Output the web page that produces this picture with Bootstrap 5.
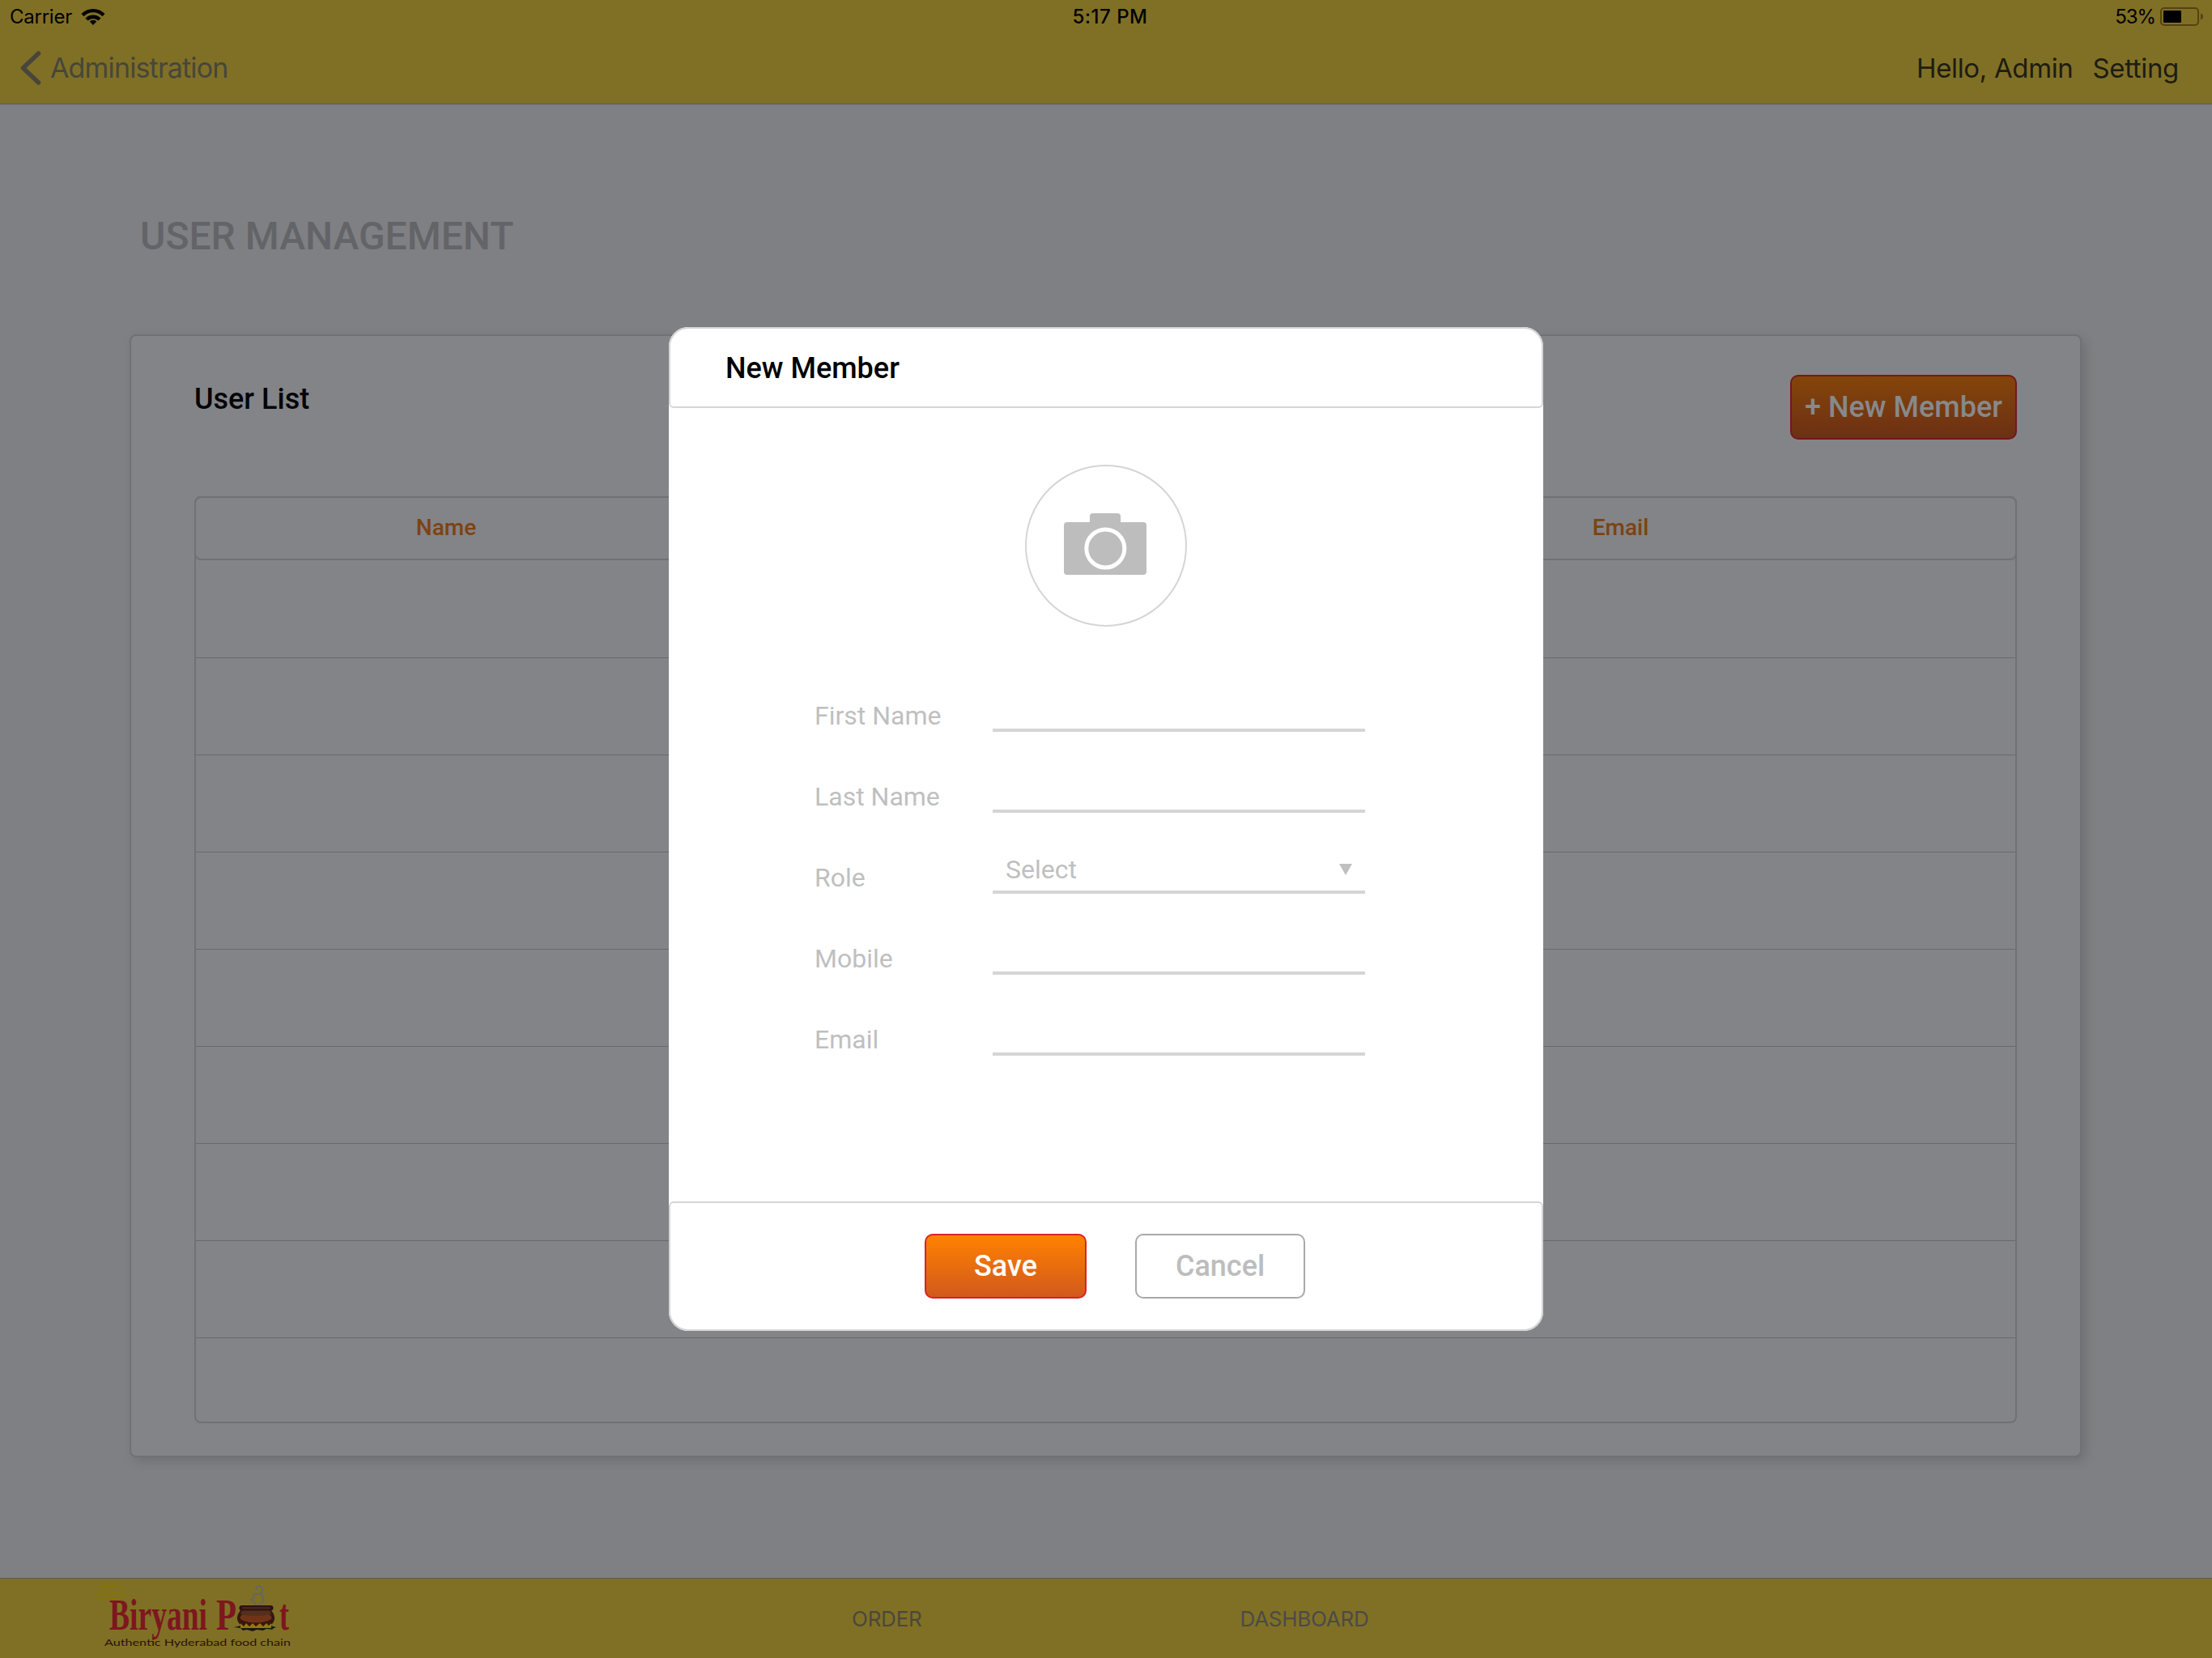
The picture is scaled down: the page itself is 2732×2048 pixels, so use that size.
<!DOCTYPE html>
<html lang="en">
<head>
<meta charset="utf-8">
<meta name="viewport" content="width=device-width, initial-scale=1">
<title>User Management</title>
<link rel="stylesheet" href="https://cdn.jsdelivr.net/npm/bootstrap@5.3.0/dist/css/bootstrap.min.css">
<style>
  html, body { height: 2048px; }
  body { background: #7f8083; font-family: Roboto, "Open Sans", sans-serif; color: #000; overflow: hidden; line-height: 1; }
  .sys { font-family: Inter, Roboto, sans-serif; }
  .top-bar { height: 129px; background: #807025; border-bottom: 1px solid #57595b; }
  .status-row { height: 46px; font-size: 24px; padding: 0 10px 5px 12px; display: grid; grid-template-columns: 1fr auto 1fr; }
  .status-row .carrier { letter-spacing: -.25px; }
  .status-row .clock { font-weight: 500; letter-spacing: .5px; padding-left: 8px; }
  .status-row .charge { letter-spacing: -1.1px; }
  .nav-row { height: 76px; padding: 0 41px 0 25px; font-size: 34px; }
  .back-link { color: #47463c; letter-spacing: -.85px; gap: 11px; }
  .who { color: #1e1c12; gap: 24px; letter-spacing: -.35px; font-size: 33px; padding-top: 1px; }
  .page-title { font-size: 48px; font-weight: 500; color: #636468; margin: 0; padding: 139px 0 0 173px; height: 284px; line-height: 48px; }
  .panel { width: 2411px; height: 1387px; margin-left: 160px; background: #838487; border: 2px solid #707175; border-radius: 8px; padding: 48px 78px 40px; box-shadow: 5px 5px 14px rgba(0,0,0,.13); }
  .panel-head { height: 150px; }
  .panel-head h2 { font-size: 36px; font-weight: 500; margin: 9px 0 0; color: #040508; }
  .act { height: 80px; border-radius: 10px; font-size: 36px; font-weight: 500; line-height: 1; display: flex; align-items: center; justify-content: center; border-width: 2px; padding: 0; }
  .act-dim { width: 280px; color: #87898c; background: linear-gradient(#84450a, #6d3014); border-color: #73181c; }
  .grid-box { border: 2px solid #707175; border-radius: 8px; height: 1145px; }
  .grid-head { margin: -2px -2px 0; height: 79px; border: 2px solid #707175; border-radius: 8px; color: #7c4313; font-size: 28px; font-weight: 500; padding-bottom: 2px; }
  .grid-line { height: 120px; border-bottom: 1px solid #68696d; }
  .grid-line:nth-child(2) { height: 121px; }
  .foot-bar { position: absolute; left: 0; right: 0; bottom: 0; height: 99px; background: #807025; border-top: 1px solid #57595b; font-size: 26px; color: #4b483b; letter-spacing: -.25px; }
  .foot-bar .tab-text { padding-top: 1px; }
  .dialog-card { position: absolute; left: 826px; top: 404px; width: 1080px; height: 1240px; background: #fff; border-radius: 24px; }
  .dlg-head { height: 100px; border: 2px solid #d5d5d5; border-radius: 24px 24px 6px 6px; padding: 2px 68px 0; font-size: 36px; font-weight: 500; }
  .dlg-foot { height: 160px; border: 2px solid #d5d5d5; border-radius: 6px 6px 24px 24px; gap: 60px; padding-left: 22px; }
  .dlg-body { padding: 70px 220px 0 180px; color: #bfbfbf; font-size: 32px; }
  .avatar { width: 200px; height: 200px; border: 2px solid #d5d5d5; margin: 0 0 30px 260px; }
  .field { height: 100px; }
  .field label { width: 220px; margin-bottom: 4px; line-height: 32px; }
  .line-input { height: 60px; border-bottom: 4px solid #d5d5d5; padding: 4px 16px 0; }
  .act-save { width: 200px; color: #fff; background: linear-gradient(#ff8200, #d1591d); border-color: #db2128; }
  .act-cancel { width: 210px; color: #bdbdbd; background: #fff; border-color: #a9a9a9; }
  .brand-art { margin-left: 115px; }
</style>
</head>
<body class="position-relative">
<header class="top-bar sys">
  <div class="status-row align-items-center">
    <div class="d-flex align-items-center carrier"><span>Carrier</span>
      <svg width="30" height="22" viewBox="0 0 30 22" style="margin-left:11px"><g fill="none" stroke="#000" stroke-width="4.4"><path d="M2 8.600a18.200 18.200 0 0 1 26 0"/><path d="M7 14a11.300 11.300 0 0 1 16 0"/></g><path d="M15 21l-4.300-4.400a6.200 6.200 0 0 1 8.600 0z"/></svg>
    </div>
    <div class="clock">5:17 PM</div>
    <div class="d-flex align-items-center justify-content-end"><span class="charge">53%</span>
      <svg width="54" height="24" viewBox="0 0 54 24" style="margin-left:6px"><rect x="1" y="1" width="46" height="21" rx="4" fill="none" stroke="#54430f" stroke-width="2"/><rect x="4" y="4" width="22" height="15" rx="1"/><path d="M50 7.500q3 1 3 4t-3 4z" fill="#54430f"/></svg>
    </div>
  </div>
  <div class="nav-row d-flex align-items-center justify-content-between">
    <div class="back-link d-flex align-items-center">
      <svg width="26" height="42" viewBox="0 0 26 42"><path d="M22.500 3L3.500 21l19 18" fill="none" stroke="#47463c" stroke-width="5.500" stroke-linecap="round" stroke-linejoin="round"/></svg>
      <span>Administration</span>
    </div>
    <div class="who d-flex"><span>Hello, Admin</span><span>Setting</span></div>
  </div>
</header>
<main>
  <h1 class="page-title">USER MANAGEMENT</h1>
  <section class="panel">
    <div class="panel-head d-flex justify-content-between align-items-start">
      <h2>User List</h2>
      <button class="btn act act-dim">+ New Member</button>
    </div>
    <div class="grid-box">
      <div class="grid-head d-flex align-items-center text-center"><span style="width:618px">Name</span><span style="width:658px"></span><span style="width:967px">Email</span></div>
      <div class="grid-line"></div><div class="grid-line"></div><div class="grid-line"></div><div class="grid-line"></div>
      <div class="grid-line"></div><div class="grid-line"></div><div class="grid-line"></div><div class="grid-line"></div>
    </div>
  </section>
</main>
<footer class="foot-bar sys d-flex align-items-center">
  <svg class="brand-art" width="255" height="98" viewBox="115 1950 255 98" letter-spacing="0">
    <path d="M123 1977q-4-10 4-16 10-6 20 0 2 5 7 8-4 5-12 6-10-3-19 2M127 1961l1-4 3 3M130 1969l4-4-1 5M139 1968l4-2-2 4" fill="none" stroke="#857500" stroke-width="1.500"/>
    <text y="2013" fill="#7e161f" font-family="'Liberation Serif', serif" font-weight="700" font-size="55"><tspan x="135" textLength="121" lengthAdjust="spacingAndGlyphs">Biryani</tspan><tspan x="267" textLength="25" lengthAdjust="spacingAndGlyphs">P</tspan><tspan x="345" textLength="12" lengthAdjust="spacingAndGlyphs">t</tspan></text>
    <path d="M317 1964q-2-4 2-5 5 0 5 5-1 4-1 6 3 4 2 8-2 4-8 5M316 1983q-1-5-6-7 3-1 4-4-3-2 1-3 6 1 8-1" fill="none" stroke="#626764" stroke-width="1.800"/>
    <path d="M289 2010l9-2h36l7 2-5 2 2 1-9-1-4 2-8-1-5 2-7-2-5 1-3-3z" fill="#141a12"/>
    <path d="M298 1988h36q9 10 2 18l-4 2h-32l-4-2q-7-8 2-18z" fill="#351610"/>
    <path d="M297 2011l0-6 4 4 3-4 4 4 4-4 4 4 5-4 4 4 4-4 3 3 3-3v6z" fill="#93780d"/>
    <ellipse cx="316" cy="1998" rx="19.500" ry="6.500" fill="#713318"/>
    <path d="M299 1989h34l2 5q-19 4-38 0z" fill="#54301c"/>
    <rect x="295.500" y="1983" width="42" height="6.500" rx="3.200" fill="#2c1310"/>
    <rect x="299" y="1985" width="35" height="2.500" rx="1.200" fill="#4b2418"/>
    <text x="129" y="2033" font-family="Lato, sans-serif" font-size="11.500" fill="#2b110b" textLength="230" lengthAdjust="spacingAndGlyphs">Authentic Hyderabad food chain</text>
  </svg>
  <span class="tab-text" style="margin-left:682px">ORDER</span>
  <span class="tab-text" style="margin-left:393px;color:#4b4a4a">DASHBOARD</span>
</footer>
<div class="dialog-card d-flex flex-column">
  <div class="dlg-head d-flex align-items-center">New Member</div>
  <div class="dlg-body flex-grow-1">
    <div class="avatar rounded-circle d-flex align-items-center justify-content-center">
      <svg width="200" height="200" viewBox="1266 574 200 200" class="flex-shrink-0"><path fill="#bdbdbd" d="M1346 645v-7q0-4 4-4h30q4 0 4 4v7h28q4 0 4 4v57q0 4-4 4h-94q-4 0-4-4v-57q0-4 4-4z"/><circle cx="1365.300" cy="677.500" r="23.500" fill="none" stroke="#fff" stroke-width="5"/></svg>
    </div>
    <div class="field d-flex align-items-end"><label>First Name</label><div class="line-input flex-grow-1"></div></div>
    <div class="field d-flex align-items-end"><label>Last Name</label><div class="line-input flex-grow-1"></div></div>
    <div class="field d-flex align-items-end"><label>Role</label><div class="line-input flex-grow-1 d-flex align-items-center justify-content-between"><span>Select</span><svg width="16" height="14"><path d="M0 0h16l-8 14z" fill="#bfbfbf"/></svg></div></div>
    <div class="field d-flex align-items-end"><label>Mobile</label><div class="line-input flex-grow-1"></div></div>
    <div class="field d-flex align-items-end"><label>Email</label><div class="line-input flex-grow-1"></div></div>
  </div>
  <div class="dlg-foot d-flex align-items-center justify-content-center">
    <button class="btn act act-save">Save</button>
    <button class="btn act act-cancel">Cancel</button>
  </div>
</div>
<script src="https://cdn.jsdelivr.net/npm/bootstrap@5.3.0/dist/js/bootstrap.bundle.min.js"></script>
</body>
</html>
